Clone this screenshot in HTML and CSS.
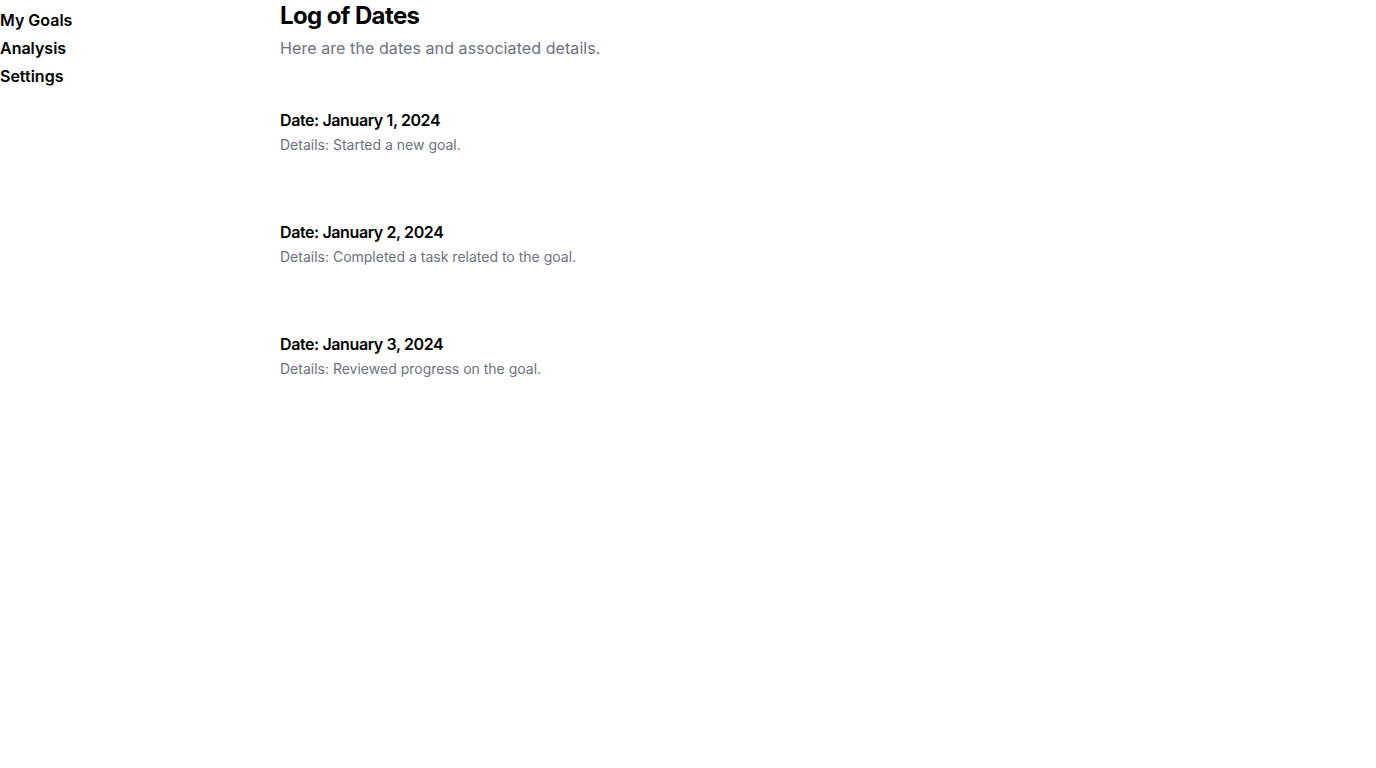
FILE: index.html
```html
<!DOCTYPE html>
<html lang="en">
<head>
<meta charset="utf-8">
<title>Log of Dates</title>
<link rel="stylesheet" href="styles.css">
</head>
<body>
<div class="layout">
  <nav class="sidebar">
    <a class="nav-link" href="#">My Goals</a>
    <a class="nav-link" href="#">Analysis</a>
    <a class="nav-link" href="#">Settings</a>
  </nav>
  <main class="content">
    <h1 class="title">Log of Dates</h1>
    <p class="subtitle">Here are the dates and associated details.</p>
    <div class="log-list">
      <div class="log-item">
        <h2 class="log-date">Date: January 1, 2024</h2>
        <p class="log-details">Details: Started a new goal.</p>
      </div>
      <div class="log-item">
        <h2 class="log-date">Date: January 2, 2024</h2>
        <p class="log-details">Details: Completed a task related to the goal.</p>
      </div>
      <div class="log-item">
        <h2 class="log-date">Date: January 3, 2024</h2>
        <p class="log-details">Details: Reviewed progress on the goal.</p>
      </div>
    </div>
  </main>
</div>
</body>
</html>
```

FILE: styles.css
```css
* { box-sizing: border-box; }
html, body {
  margin: 0;
  padding: 0;
  background: #ffffff;
  font-family: Inter, "Noto Sans", sans-serif;
  color: #000000;
}
.layout {
  display: flex;
  min-height: 768px;
}
.sidebar {
  width: 280px;
  flex-shrink: 0;
  display: flex;
  flex-direction: column;
  gap: 4px;
  padding-top: 8px;
}
.nav-link {
  font-size: 16px;
  line-height: 24px;
  font-weight: 600;
  color: #000000;
  text-decoration: none;
}
.content {
  flex: 1;
  display: flex;
  flex-direction: column;
}
.title {
  margin: 0;
  font-size: 24px;
  line-height: 32px;
  font-weight: 700;
  letter-spacing: -0.025em;
}
.subtitle {
  margin: 4px 0 0;
  font-size: 16px;
  line-height: 24px;
  color: #6b7280;
  letter-spacing: 0.005em;
}
.log-list {
  margin-top: 48px;
  display: flex;
  flex-direction: column;
  gap: 65px;
}
.log-date {
  margin: 0;
  font-size: 16px;
  line-height: 24px;
  font-weight: 600;
  letter-spacing: -0.025em;
}
.log-details {
  margin: 3px 0 0;
  font-size: 14px;
  line-height: 20px;
  color: #6b7280;
}
```
